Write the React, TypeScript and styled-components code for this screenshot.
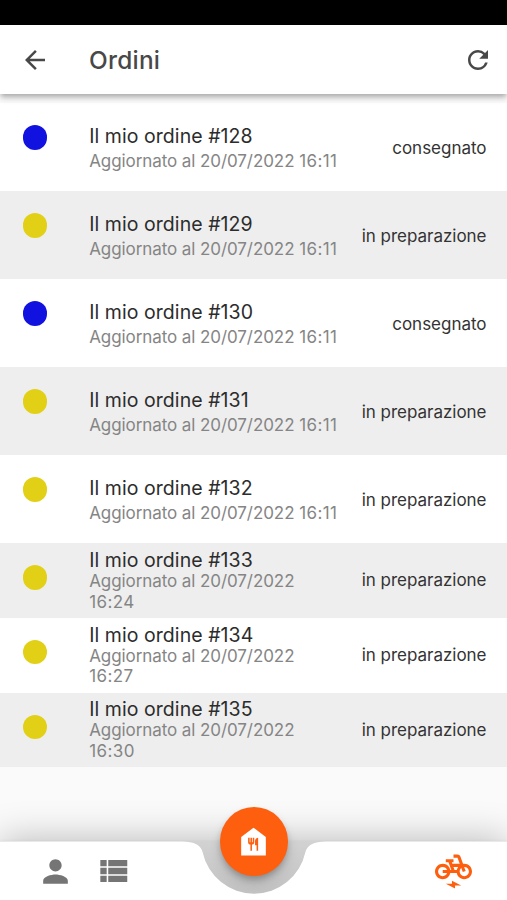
import React from 'react';
import styled, { createGlobalStyle } from 'styled-components';
import { MdArrowBack, MdRefresh, MdPerson, MdElectricBike, MdFoodBank } from 'react-icons/md';

const GlobalStyle = createGlobalStyle`
  * { box-sizing: border-box; }
  body { margin: 0; background: #fafafa; }
  svg { display: block; flex: none; }
`;

const Screen = styled.div`
  position: relative;
  display: flex;
  flex-direction: column;
  width: 507px;
  height: 900px;
  overflow: hidden;
  background: #fafafa;
  font-family: Inter, "Liberation Sans", sans-serif;
`;

const StatusBar = styled.div`
  flex: none;
  height: 25px;
  background: #000;
`;

const Header = styled.header`
  z-index: 1;
  flex: none;
  display: flex;
  align-items: center;
  height: 69px;
  padding: 0 14px 0 20px;
  background: #fff;
  color: #484848;
  box-shadow: 0 3px 5px -1px rgba(0, 0, 0, 0.24), 0 5px 6px rgba(0, 0, 0, 0.12);
`;

const Title = styled.h1`
  flex: 1;
  margin: 0 0 0 39px;
  font-size: 24.4px;
  font-weight: 500;
  line-height: 30px;
  letter-spacing: 0.25px;
`;

const IconButton = styled.button`
  display: flex;
  padding: 0;
  border: 0;
  background: none;
  color: inherit;
`;

const Orders = styled.ul`
  flex: 1;
  margin: 0;
  padding: 9.4px 0 0;
  list-style: none;
`;

const Order = styled.li<{ $shaded: boolean; $tall: boolean }>`
  display: flex;
  align-items: center;
  height: ${p => (p.$tall ? 88 : 74.6)}px;
  padding: 0 20.5px 0 22.7px;
  background: ${p => (p.$shaded ? '#eeeeee' : '#ffffff')};
`;

const Dot = styled.span<{ $delivered: boolean }>`
  flex: none;
  align-self: flex-start;
  width: 24.5px;
  height: 24.5px;
  margin-top: 22px;
  border-radius: 50%;
  background: ${p => (p.$delivered ? '#1212e0' : '#e2d016')};
`;

const Details = styled.div`
  flex: 1;
  margin-left: 42px;
`;

const Name = styled.div<{ $tall: boolean }>`
  font-size: 19.5px;
  line-height: 24px;
  letter-spacing: 0.06px;
  color: #2c2c2c;
  margin-top: ${p => (p.$tall ? 0.6 : -1)}px;
`;

const Updated = styled.div<{ $tall: boolean }>`
  width: ${p => (p.$tall ? 260 : 240)}px;
  margin-top: ${p => (p.$tall ? 2.9 : -1)}px;
  font-size: 17px;
  line-height: 20.6px;
  letter-spacing: -0.08px;
  color: #858585;
`;

const Time = styled.span`
  letter-spacing: 0.42px;
`;

const State = styled.span<{ $tall: boolean }>`
  flex: none;
  margin-top: ${p => (p.$tall ? 1 : -0.6)}px;
  font-size: 17px;
  line-height: 22px;
  letter-spacing: -0.02px;
  color: #333;
`;

const BottomBar = styled.nav`
  position: absolute;
  left: 0;
  bottom: 0;
  width: 507px;
  height: 59px;
  background: linear-gradient(#d2d2d2, #c0c0c0);
  box-shadow: 0 -2px 36px rgba(0, 0, 0, 0.25), 0 0 3px rgba(0, 0, 0, 0.06);
`;

const BarShape = styled.svg`
  position: absolute;
  inset: 0;
`;

const BarItems = styled.div`
  position: relative;
  display: flex;
  align-items: center;
  height: 60px;
  padding: 0 35px 0 36.5px;
  color: #757575;
`;

const ListButton = styled(IconButton)`
  margin-left: 20px;
`;

const BikeButton = styled(IconButton)`
  margin-left: auto;
  color: #fd5f0f;
`;

const HomeButton = styled.button`
  position: absolute;
  left: 219.7px;
  top: 807.2px;
  display: flex;
  align-items: center;
  justify-content: center;
  width: 68.6px;
  height: 68.6px;
  padding: 0;
  border: 0;
  border-radius: 50%;
  background: #fd5f0f;
  color: #fff;
  box-shadow: 0 4px 6px -1px rgba(0, 0, 0, 0.22), 0 7px 12px rgba(0, 0, 0, 0.13);
`;

const orders = [
  { id: 128, time: '16:11', delivered: true },
  { id: 129, time: '16:11', delivered: false },
  { id: 130, time: '16:11', delivered: true },
  { id: 131, time: '16:11', delivered: false },
  { id: 132, time: '16:11', delivered: false },
  { id: 133, time: '16:24', delivered: false },
  { id: 134, time: '16:27', delivered: false },
  { id: 135, time: '16:30', delivered: false },
];

export default function App() {
  return (
    <>
      <GlobalStyle />
      <Screen>
        <StatusBar />
        <Header>
          <IconButton aria-label="Indietro"><MdArrowBack size={30} /></IconButton>
          <Title>Ordini</Title>
          <IconButton aria-label="Aggiorna"><MdRefresh size={30} /></IconButton>
        </Header>
        <Orders>
          {orders.map((order, i) => {
            const tall = i < 5;
            return (
              <Order key={order.id} $shaded={i % 2 === 1} $tall={tall}>
                <Dot $delivered={order.delivered} />
                <Details>
                  <Name $tall={tall}>Il mio ordine #{order.id}</Name>
                  <Updated $tall={tall}>
                    Aggiornato al 20/07/2022 <Time>{order.time}</Time>
                  </Updated>
                </Details>
                <State $tall={tall}>{order.delivered ? 'consegnato' : 'in preparazione'}</State>
              </Order>
            );
          })}
        </Orders>
        <BottomBar>
          <BarShape width="507" height="59" viewBox="0 0 507 59">
            <path
              d="M0 0.4H182Q200.3 0.4 202.7 11.4A52.5 52.5 0 0 0 305.3 11.4Q307.7 0.4 326 0.4H507V59H0Z"
              fill="#fff"
            />
          </BarShape>
          <BarItems>
            <IconButton aria-label="Profilo"><MdPerson size={37} /></IconButton>
            <ListButton aria-label="Ordini">
              <svg width="38" height="38" viewBox="0 0 24 24" fill="currentColor">
                <path d="M4 14h4v-4H4v4zm0 5h4v-4H4v4zM4 9h4V5H4v4zm5 5h12v-4H9v4zm0 5h12v-4H9v4zM9 5v4h12V5H9z" />
              </svg>
            </ListButton>
            <BikeButton aria-label="Consegna"><MdElectricBike size={37} /></BikeButton>
          </BarItems>
        </BottomBar>
        <HomeButton aria-label="Home"><MdFoodBank size={37} /></HomeButton>
      </Screen>
    </>
  );
}
